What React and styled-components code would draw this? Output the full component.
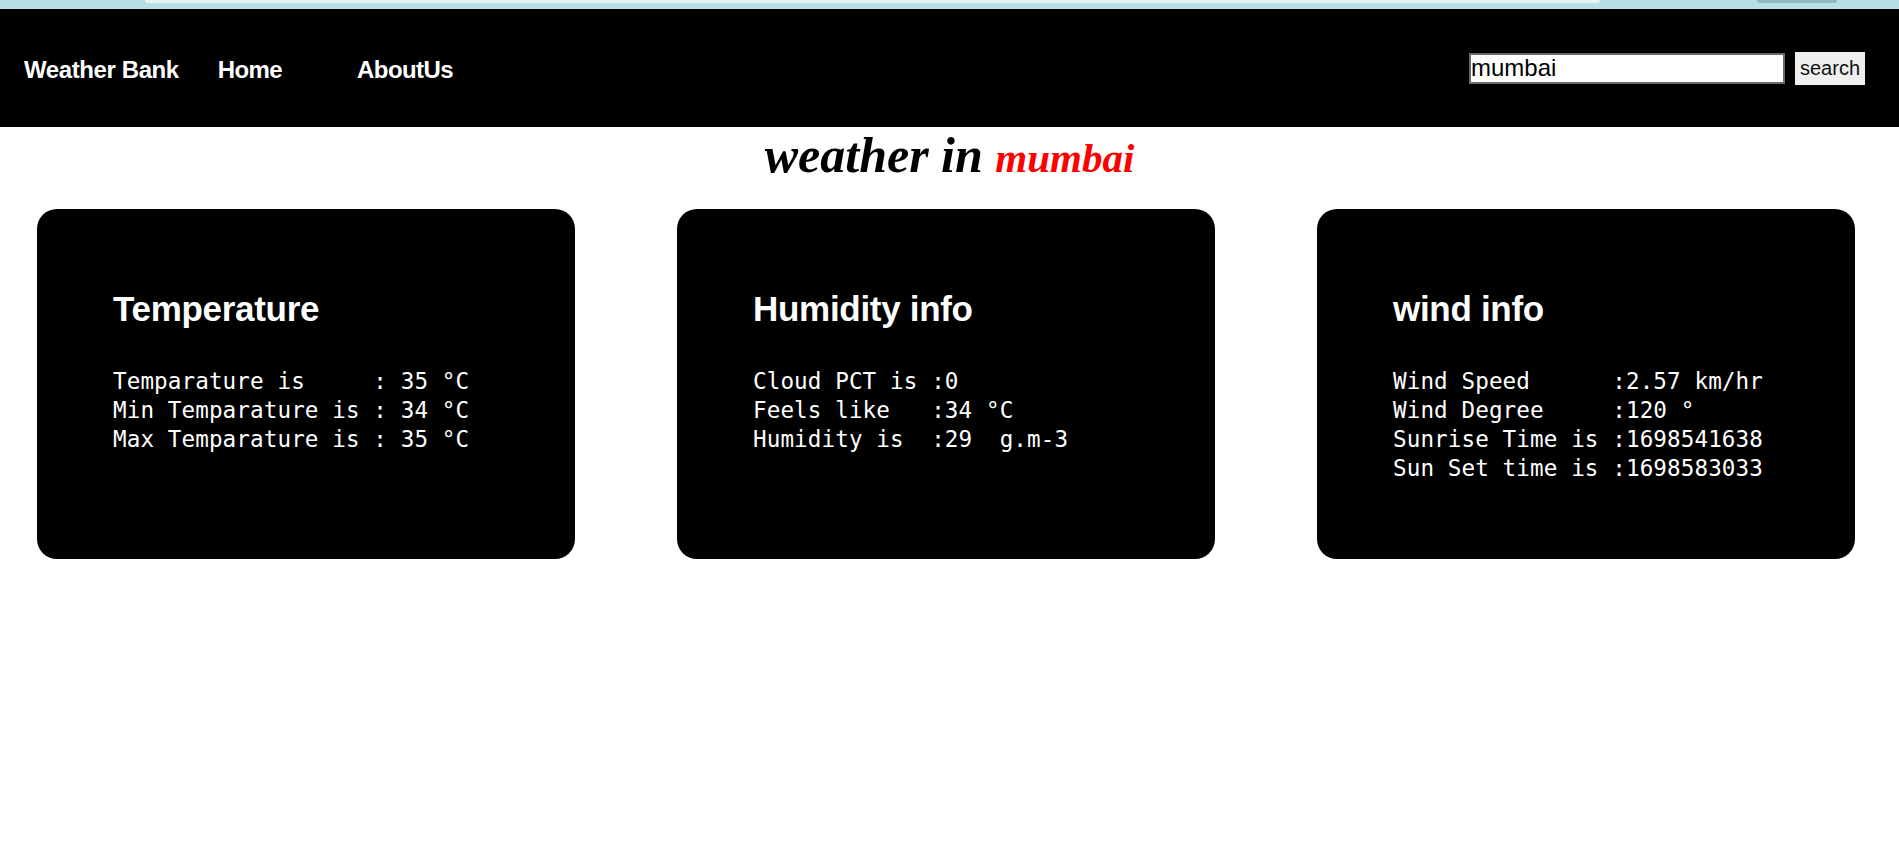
import React from "react";
import styled, { createGlobalStyle } from "styled-components";

const GlobalStyle = createGlobalStyle`
  * { box-sizing: border-box; }
  body {
    margin: 0;
    background: #ffffff;
    font-family: "Liberation Sans", Arial, sans-serif;
  }
`;

const Page = styled.div`
  display: flex;
  flex-direction: column;
  min-height: 864px;
`;

const TopStrip = styled.div`
  display: flex;
  align-items: flex-start;
  height: 9px;
  background: #b6e0e4;
  padding-left: 145px;
  gap: 157px;
`;

const TabPiece = styled.div`
  width: ${({ w }) => w}px;
  height: ${({ h }) => h}px;
  background: ${({ bg }) => bg};
  border-radius: 0 0 ${({ r }) => r}px ${({ r }) => r}px;
`;

const Nav = styled.nav`
  display: flex;
  align-items: center;
  height: 118px;
  background: #000;
  padding: 4px 34px 0 24px;
`;

const Brand = styled.a`
  color: #fff;
  font-weight: bold;
  font-size: 24px;
  letter-spacing: -0.4px;
  margin-right: 39px;
`;

const NavLink = styled.a`
  color: #fff;
  font-weight: bold;
  font-size: 24px;
  letter-spacing: -0.6px;
  margin-right: ${({ gap }) => gap}px;
`;

const SearchForm = styled.form`
  display: flex;
  align-items: center;
  gap: 10px;
  margin-left: auto;
  margin-top: -4px;
`;

const SearchInput = styled.input`
  width: 316px;
  height: 31px;
  border: 2px solid #6b6b6b;
  padding: 0;
  font-family: "Liberation Sans", Arial, sans-serif;
  font-size: 24px;
  color: #000;
  background: #fff;
  outline: none;
`;

const SearchButton = styled.button`
  width: 70px;
  height: 33px;
  border: none;
  background: #efefef;
  font-family: "Liberation Sans", Arial, sans-serif;
  font-size: 20px;
  color: #111;
  padding: 0;
`;

const Title = styled.h1`
  margin: 3px 0 0;
  text-align: center;
  font-family: "Liberation Serif", "Times New Roman", serif;
  font-style: italic;
  font-weight: bold;
  font-size: 50px;
  line-height: 51px;
  color: #000;
`;

const City = styled.span`
  color: #f00;
  font-size: 41px;
`;

const CardRow = styled.div`
  display: flex;
  gap: 102px;
  padding-left: 37px;
  margin-top: 25px;
`;

const Card = styled.div`
  width: 538px;
  height: 350px;
  background: #000;
  border-radius: 20px;
  padding: 80px 76px;
  color: #fff;
`;

const CardTitle = styled.h2`
  margin: 0 0 39px;
  font-size: 35px;
  line-height: 39px;
  font-weight: bold;
  letter-spacing: -0.3px;
`;

const Info = styled.pre`
  margin: 0;
  font-family: "DejaVu Sans Mono", Consolas, monospace;
  font-size: 22.6px;
  line-height: 29px;
  letter-spacing: 0.1px;
`;

const cards = [
  {
    title: "Temperature",
    text: "Temparature is     : 35 °C\nMin Temparature is : 34 °C\nMax Temparature is : 35 °C",
  },
  {
    title: "Humidity info",
    text: "Cloud PCT is :0\nFeels like   :34 °C\nHumidity is  :29  g.m-3",
  },
  {
    title: "wind info",
    text: "Wind Speed      :2.57 km/hr\nWind Degree     :120 °\nSunrise Time is :1698541638\nSun Set time is :1698583033",
  },
];

const App = () => {
  return (
    <Page>
      <GlobalStyle />
      <TopStrip>
        <TabPiece w={1455} h={3} bg="#e8f5f6" r={8} />
        <TabPiece w={80} h={3} bg="#8fb9bd" r={6} />
      </TopStrip>
      <Nav>
        <Brand>Weather Bank</Brand>
        <NavLink gap={75}>Home</NavLink>
        <NavLink gap={0}>AboutUs</NavLink>
        <SearchForm onSubmit={(e) => e.preventDefault()}>
          <SearchInput defaultValue="mumbai" />
          <SearchButton>search</SearchButton>
        </SearchForm>
      </Nav>
      <Title>
        weather in <City>mumbai</City>
      </Title>
      <CardRow>
        {cards.map((c) => (
          <Card key={c.title}>
            <CardTitle>{c.title}</CardTitle>
            <Info>{c.text}</Info>
          </Card>
        ))}
      </CardRow>
    </Page>
  );
};

export default App;
